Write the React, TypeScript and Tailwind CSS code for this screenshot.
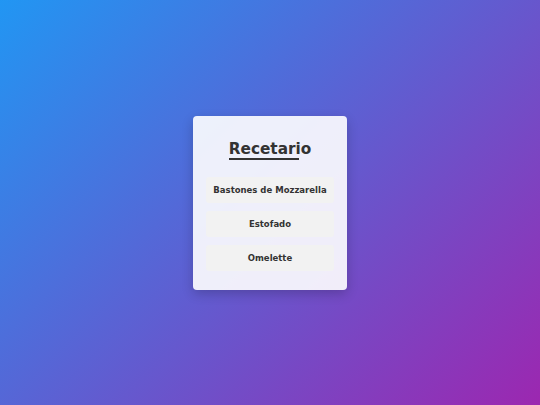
const recipes = ["Bastones de Mozzarella", "Estofado", "Omelette"];

export default function App() {
  return (
    <div
      className="flex h-screen w-full items-center justify-center bg-[linear-gradient(135deg,#2196f3,#9c27b0)]"
      style={{ fontFamily: '"DejaVu Sans", sans-serif' }}
    >
      <div className="flex w-[154px] flex-col items-center rounded-[4px] bg-white/90 px-[13px] pb-[19px] pt-[24px] shadow-[0_4px_12px_rgba(0,0,0,0.2)]">
        <h1 className="relative text-[15.3px] font-bold leading-[18px] text-[#333]">
          Recetario
          <span className="absolute bottom-[-2px] left-0 h-[1.5px] w-[70px] bg-[#333]" />
        </h1>
        <div className="mt-[19px] flex w-full flex-col gap-[8px]">
          {recipes.map((r) => (
            <button
              key={r}
              className="h-[26px] w-full rounded-[3px] bg-[#f2f2f2] pt-[1px] text-[8.5px] font-bold text-[#333]"
            >
              {r}
            </button>
          ))}
        </div>
      </div>
    </div>
  );
}
